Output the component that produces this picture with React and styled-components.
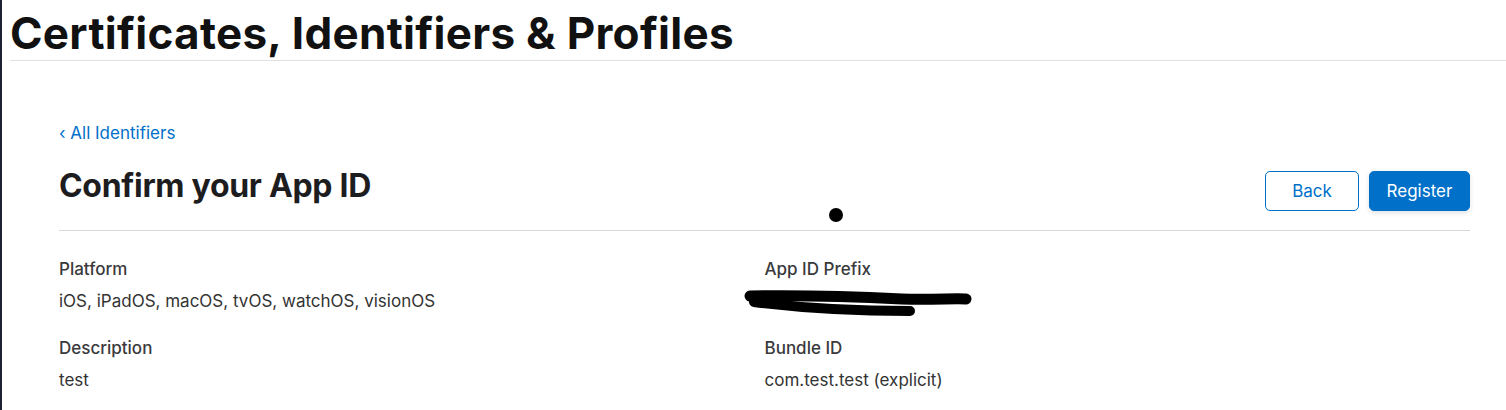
import React from 'react';
import styled, { createGlobalStyle } from 'styled-components';

const GlobalStyle = createGlobalStyle`
  html, body {
    margin: 0;
    padding: 0;
    background: #fff;
  }
  body {
    font-family: Inter, "Noto Sans", "Liberation Sans", sans-serif;
    color: #1d1d1f;
  }
`;

const Page = styled.div`
  position: relative;
  min-height: 410px;
  border-left: 2px solid #1c2234;
  box-sizing: border-box;
`;

const Header = styled.header`
  margin-left: 8px;
  height: 61px;
  border-bottom: 1px solid #e1e1e3;
  box-sizing: border-box;
`;

const SiteTitle = styled.h1`
  margin: 0;
  padding-top: 8px;
  font-size: 44px;
  line-height: 50px;
  font-weight: 700;
  letter-spacing: 0.3px;
  color: #111;
`;

const Main = styled.main`
  padding: 0 36px 0 57px;
`;

const BackLink = styled.a`
  display: inline-block;
  margin-top: 62px;
  font-size: 17px;
  line-height: 20px;
  color: #0070c9;
  text-decoration: none;
`;

const TitleRow = styled.div`
  position: relative;
  display: flex;
  align-items: flex-start;
  justify-content: space-between;
  margin-top: 23px;
  padding-bottom: 19px;
  border-bottom: 1px solid #d9d9dc;
`;

const PageTitle = styled.h2`
  margin: 0;
  font-size: 32px;
  line-height: 40px;
  font-weight: 700;
  letter-spacing: -0.3px;
  color: #1d1d1f;
`;

const Actions = styled.div`
  display: flex;
  gap: 10px;
  margin-top: 5px;
`;

const Button = styled.button`
  height: 40px;
  width: ${({ $primary }) => ($primary ? '101px' : '94px')};
  padding: 0;
  border-radius: 5px;
  font-family: inherit;
  font-size: 17px;
  border: 1px solid #0070c9;
  background: ${({ $primary }) => ($primary ? '#0070c9' : '#fff')};
  color: ${({ $primary }) => ($primary ? '#fff' : '#0070c9')};
  box-shadow: ${({ $primary }) => ($primary ? '0 2px 5px rgba(0,0,0,0.12)' : 'none')};
  cursor: pointer;
`;

const Dot = styled.span`
  position: absolute;
  left: 770px;
  top: 42px;
  width: 14px;
  height: 14px;
  border-radius: 50%;
  background: #000;
`;

const Details = styled.dl`
  display: grid;
  grid-template-columns: 1fr 1fr;
  row-gap: 17px;
  margin: 28px 0 0;
`;

const Field = styled.div`
  display: flex;
  flex-direction: column;
  gap: 11px;
`;

const Label = styled.dt`
  font-size: 17px;
  line-height: 21px;
  font-weight: 500;
  color: #3a3a3c;
`;

const Value = styled.dd`
  margin: 0;
  font-size: 17px;
  line-height: 21px;
  color: #333;
`;

const Scribble = styled.svg`
  display: block;
  margin-left: -23px;
  margin-top: -2px;
`;

const Redacted = () => (
  <Scribble width="240" height="32" viewBox="0 0 240 32">
    <path
      d="M8 7 C 60 6, 120 8, 160 10 C 190 11, 215 9, 224 10"
      stroke="#000"
      strokeWidth="11"
      strokeLinecap="round"
      fill="none"
    />
    <path
      d="M12 13 C 60 19, 120 22, 168 22"
      stroke="#000"
      strokeWidth="10"
      strokeLinecap="round"
      fill="none"
    />
  </Scribble>
);

const fields = [
  { label: 'Platform', value: 'iOS, iPadOS, macOS, tvOS, watchOS, visionOS' },
  { label: 'App ID Prefix', redacted: true },
  { label: 'Description', value: 'test' },
  { label: 'Bundle ID', value: 'com.test.test (explicit)' },
];

export default function App() {
  return (
    <>
      <GlobalStyle />
      <Page>
        <Header>
          <SiteTitle>Certificates, Identifiers &amp; Profiles</SiteTitle>
        </Header>
        <Main>
          <BackLink href="#">‹ All Identifiers</BackLink>
          <TitleRow>
            <PageTitle>Confirm your App ID</PageTitle>
            <Dot />
            <Actions>
              <Button>Back</Button>
              <Button $primary>Register</Button>
            </Actions>
          </TitleRow>
          <Details>
            {fields.map((f) => (
              <Field key={f.label}>
                <Label>{f.label}</Label>
                <Value>{f.redacted ? <Redacted /> : f.value}</Value>
              </Field>
            ))}
          </Details>
        </Main>
      </Page>
    </>
  );
}
